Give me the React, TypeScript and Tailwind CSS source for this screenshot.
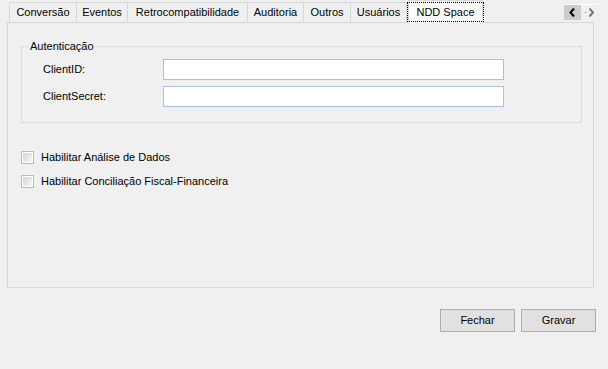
import React from "react";

const tabs = [
  { label: "Conversão", w: "w-[67px]" },
  { label: "Eventos", w: "w-[51px]" },
  { label: "Retrocompatibilidade", w: "w-[120px]" },
  { label: "Auditoria", w: "w-[56px]" },
  { label: "Outros", w: "w-[47px]" },
  { label: "Usuários", w: "w-[57px] border-r" },
];

function CheckBox({ label }: { label: string }) {
  return (
    <label className="flex h-[13px] items-center gap-[7px]">
      <span className="flex h-[13px] w-[13px] items-center justify-center border border-[#b3bdd0] bg-white">
        <span className="h-[9px] w-[9px] bg-gradient-to-br from-[#d2d2d2] to-[#f8f8f8]" />
      </span>
      <span>{label}</span>
    </label>
  );
}

function Field({ label }: { label: string }) {
  return (
    <div className="flex h-[21px] items-center">
      <span className="w-[141px] pl-[21px]">{label}</span>
      <div className="h-[21px] w-[341px] border border-[#adc0e0] bg-white" />
    </div>
  );
}

export default function App() {
  return (
    <div
      className="h-[369px] w-[608px] overflow-hidden bg-[#f0f0f0] text-[11px] text-black"
      style={{ fontFamily: '"Liberation Sans", Arial, sans-serif' }}
    >
      {/* tab strip */}
      <div className="flex h-[22px] items-end pl-[9px] pt-[2px]">
        {tabs.map((t) => (
          <div
            key={t.label}
            className={`flex h-[20px] items-center justify-center whitespace-nowrap border-l border-t border-[#d9d9d9] ${t.w}`}
          >
            {t.label}
          </div>
        ))}
        <div className="relative z-10 -mb-px ml-px flex h-[23px] w-[75px] shrink-0 items-start justify-center border-x border-t border-[#d9d9d9] bg-white pt-[1px]">
          <span className="whitespace-nowrap border border-dotted border-black px-[8px] pt-px leading-[17px]">
            NDD Space
          </span>
        </div>
        <div className="ml-[81px] flex h-[16px] self-center border-t border-white">
          <div className="flex h-[15px] w-[17px] items-center justify-center bg-[#cccccc]">
            <svg width="7" height="9" viewBox="0 0 7 9">
              <path d="M5 0.5 L1.5 4.5 L5 8.5" stroke="#000" strokeWidth="2" fill="none" />
            </svg>
          </div>
          <div className="flex h-[15px] w-[17px] items-center justify-center">
            <svg width="10" height="9" viewBox="0 0 10 9">
              <rect x="0" y="4" width="1" height="1" fill="#777" />
              <path d="M4.5 0.5 L8 4.5 L4.5 8.5" stroke="#777" strokeWidth="2" fill="none" />
            </svg>
          </div>
        </div>
      </div>

      {/* tab page */}
      <div className="ml-[7px] flex h-[266px] w-[587px] flex-col border border-[#d9d9d9] px-[13px] pt-[16px]">
        <fieldset className="w-[561px] border border-[#dcdcdc] pb-[15px]">
          <legend className="ml-[7px] px-px leading-[14px]">Autenticação</legend>
          <div className="mt-[6px] flex flex-col gap-[6px]">
            <Field label="ClientID:" />
            <Field label="ClientSecret:" />
          </div>
        </fieldset>
        <div className="mt-[28px] flex flex-col gap-[11px]">
          <CheckBox label="Habilitar Análise de Dados" />
          <CheckBox label="Habilitar Conciliação Fiscal-Financeira" />
        </div>
      </div>

      {/* buttons */}
      <div className="mr-[12px] mt-[21px] flex justify-end gap-[6px]">
        <button className="h-[23px] w-[75px] border border-[#adadad] bg-[#e1e1e1]">Fechar</button>
        <button className="h-[23px] w-[75px] border border-[#adadad] bg-[#e1e1e1]">Gravar</button>
      </div>
    </div>
  );
}
